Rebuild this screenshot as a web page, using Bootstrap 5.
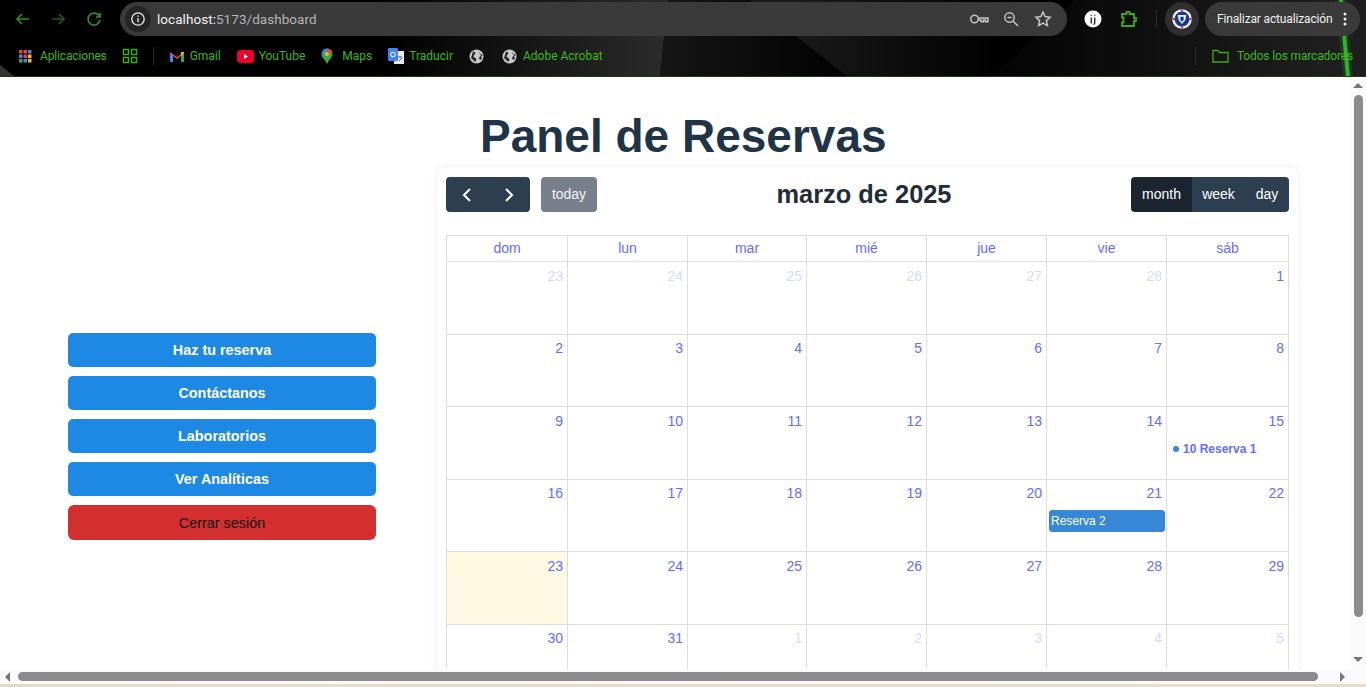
<!DOCTYPE html>
<html lang="es"><head><meta charset="utf-8"><title>Panel de Reservas</title>
<link href="https://cdn.jsdelivr.net/npm/bootstrap@5.3.0/dist/css/bootstrap.min.css" rel="stylesheet">
<style>
html,body{height:100%;overflow:hidden}
body{font-family:"Liberation Sans",Arial,sans-serif;background:#fff;font-size:16px}
.shell{height:687px}
.chrome{height:77px;flex:none;color:#3fb81d;font-family:Roboto,"Noto Sans",sans-serif;border-bottom:1px solid #1e3a1a;background-color:#000;background-repeat:no-repeat;
 background-image:url("data:image/svg+xml,%3Csvg xmlns='http://www.w3.org/2000/svg' width='1366' height='77'%3E%3Cdefs%3E%3ClinearGradient id='a' gradientUnits='userSpaceOnUse' x1='380' y1='0' x2='660' y2='0'%3E%3Cstop offset='0' stop-color='%23000'/%3E%3Cstop offset='1' stop-color='%232a2a2a'/%3E%3C/linearGradient%3E%3ClinearGradient id='b' gradientUnits='userSpaceOnUse' x1='665' y1='0' x2='830' y2='0'%3E%3Cstop offset='0' stop-color='%23151515'/%3E%3Cstop offset='1' stop-color='%23030303'/%3E%3C/linearGradient%3E%3ClinearGradient id='c' gradientUnits='userSpaceOnUse' x1='800' y1='0' x2='1010' y2='0'%3E%3Cstop offset='0' stop-color='%23191919'/%3E%3Cstop offset='1' stop-color='%23000'/%3E%3C/linearGradient%3E%3ClinearGradient id='d' gradientUnits='userSpaceOnUse' x1='1010' y1='0' x2='1320' y2='0'%3E%3Cstop offset='0' stop-color='%23040404'/%3E%3Cstop offset='1' stop-color='%231e1e1e'/%3E%3C/linearGradient%3E%3C/defs%3E%3Cpolygon points='380,0 668,0 660,77 380,77' fill='url(%23a)'/%3E%3Cpolygon points='668,0 750,0 848,77 660,77' fill='url(%23b)'/%3E%3Cpolygon points='750,0 1075,0 991,77 848,77' fill='url(%23c)'/%3E%3Cpolygon points='1075,0 1366,0 1366,77 991,77' fill='url(%23d)'/%3E%3Cpolygon points='0,65 15,77 0,77' fill='%23333'/%3E%3Cpolygon points='1335,0 1346,0 1353,77 1343,77' fill='%2322a022' fill-opacity='.18'/%3E%3Cpolygon points='1339,0 1343,0 1350,77 1346,77' fill='%232fb52c'/%3E%3C/svg%3E")}
.toprow{height:38px;padding:0 0 0 11px}
.tophold{height:38px}
.bookrow{height:36px;padding:0 13px 0 18px;font-size:12px}
.navglyph{width:24px;height:24px;margin-right:11px}
.navlast{margin-left:1px;margin-right:0}
.omnibox{width:947px;height:34px;margin-left:14px;margin-top:2px;border-radius:17px;background:#3a3a3a;padding:0 14px 0 5px}
.infocirc{width:26px;height:26px;border-radius:50%;background:#252525}
.url{font-size:13.5px;color:#b4b4b4;margin-left:6px;letter-spacing:.05px}
.url b{font-weight:400;color:#f2f2f2}
.omnitools{gap:12px}
.tophold.extras{margin-left:17px}
.puzzle{margin-left:17px}
.sep-top{margin:0 8px 0 17px}
.updatepill{height:34px;width:155px;margin-top:2px;margin-left:6px;border-radius:17px;background:#3a3a3a;color:#f0f0f0;font-size:12px;padding-left:12px;letter-spacing:-.15px}
.dots{margin-right:7px}
.bm{gap:5px;white-space:nowrap}
.tight{letter-spacing:-.15px;gap:7px}
.tight-b{letter-spacing:-.15px;gap:8px}
.vsep{width:1px;height:18px;background:#2c2c2c}
.avatarbox{width:34px;height:34px;border-radius:50%;background:#2f2f2f;margin-top:2px}
.bm-grid{margin-left:15px}
.sep-book{margin:0 15px 0 15px}
.bm-16{margin-left:16px}.bm-15{margin-left:15px}.bm-18{margin-left:18px}
.gap-3px{margin-left:3px}.gap-1px{margin-left:1px}
.sep-end{margin-right:16px}
.workarea{min-height:0}
.pagepane{width:1350px;overflow:hidden;background:#fff}
.sidepane{width:437px;flex:none;padding:256px 0 0 68px}
.sidebtn{display:block;width:308px;height:34px;margin-bottom:9px;padding:0;border:0;border-radius:5px;background:#1e88e5;color:#fff;font-size:14.4px;font-weight:700;line-height:34px;text-align:center}
.sidebtn.logout{height:35px;border-radius:6px;background:#d32f2f;color:#111;font-weight:400;padding-top:1px}
.mainpane{width:913px}
.pagetitle{margin:33px 0 4px 43px;font-size:46px;line-height:53px;font-weight:700;color:#1f3447}
.calcard{width:861px;height:520px;padding:10px 9px 0;border-radius:10px;box-shadow:0 0 9px rgba(0,0,0,.07);background:#fff}
.caltools{height:35px;margin-bottom:23px}
.fcbtn{height:35px;border:0;padding:0;background:#2c3e50;color:#fff;font-size:14px;border-radius:0;line-height:35px}
.arrowbtn{width:42px}
.firstb{border-radius:4px 0 0 4px}.lastb{border-radius:0 4px 4px 0}
.todaybtn{width:56px;margin-left:11px;background:#777f8b;border-radius:4px;color:#f1f2f3}
.activeb{width:61px;background:#1a252f;border-radius:4px 0 0 4px}
.weekb{width:53px}.dayb{width:44px;border-radius:0 4px 4px 0}
.caltitle{font-size:25.4px;font-weight:700;color:#1f2d3a;margin:0 0 0 92px;line-height:35px;width:350px;text-align:center;flex:none}
.calgrid{border-collapse:collapse;table-layout:fixed;width:843px}
.calgrid col{width:120px}
.calgrid col:nth-child(1){width:121px}
.calgrid col:nth-child(3){width:119px}
.calgrid col:nth-child(7){width:122px}
.calgrid th,.calgrid td{border:1px solid #ddd;padding:0}
.calgrid th{height:26px;text-align:center;font-weight:400;font-size:14px;color:#646cff}
.calgrid td{height:72.5px;vertical-align:top;text-align:right;color:#646cff;font-size:14px}
.calgrid td.ghost{color:#d8d9ff}
.calgrid td.todaycell{background:#fef9e0}
.num{display:block;padding:5.75px 4px 0 0;line-height:16px;height:29px}
.dotev{display:flex;align-items:center;padding-left:6px;margin-top:6px;font-size:12px;font-weight:700;color:#646cff;line-height:14px;text-align:left}
.dotev i{width:6px;height:6px;border-radius:50%;background:#3788d8;margin-right:4px}
.blockev{display:block;margin:1px 1px 0 2px;height:22px;line-height:21px;padding-left:1px;background:#3788d8;border:1px solid #3788d8;border-radius:3px;color:#fff;font-size:12px;text-align:left}
.vbar{width:16px;flex:none;background:#fafafa}
.vthumb{width:9px;height:522px;margin:7px 0 0 4px;background:#8c8c8c;border-radius:5px}
.hbar{height:15px;flex:none;background:#fafafa;padding:0 21px 0 5px}
.hthumb{width:1300px;height:9px;background:#8c8c8c;border-radius:5px;margin-left:8px}
.strip{height:3px;flex:none;background:linear-gradient(90deg,#e0dbc8,#e8dcca 25%,#e2dcc8 30%,#e6dccb 60%,#e9dccd)}
.tri-l{width:0;height:0;border:5px solid transparent;border-left:0;border-right:5px solid #777}
.tri-r{width:0;height:0;border:5px solid transparent;border-right:0;border-left:5px solid #777}
.tri-u{width:0;height:0;margin:6px auto 0;border:5px solid transparent;border-top:0;border-bottom:5px solid #777}
.tri-d{width:0;height:0;margin:auto auto 7px;border:5px solid transparent;border-bottom:0;border-top:5px solid #777}
</style></head><body>
<div class="shell d-flex flex-column">
<header class="chrome">
 <div class="toprow d-flex align-items-start">
  <div class="tophold d-flex align-items-center">
   <svg class="navglyph" viewBox="0 0 24 24" fill="none" stroke="#2f8f19" stroke-width="1.7"><path d="M18 12H6M11 7l-5 5 5 5"/></svg>
   <svg class="navglyph" viewBox="0 0 24 24" fill="none" stroke="#1e5c10" stroke-width="1.7"><path d="M6 12h12M13 7l5 5-5 5"/></svg>
   <svg class="navglyph navlast" viewBox="0 0 24 24" fill="none" stroke="#2f8f19" stroke-width="1.7"><path d="M17.500 9.500A6 6 0 1 0 18 13M18 6v4h-4"/></svg>
  </div>
  <div class="omnibox d-flex align-items-center">
   <span class="infocirc d-flex align-items-center justify-content-center"><svg width="16" height="16" viewBox="0 0 16 16" fill="none" stroke="#eee" stroke-width="1.3"><circle cx="8" cy="8" r="6.200"/><path d="M8 7v4.200M8 4.400v1.300"/></svg></span>
   <span class="url"><b>localhost:</b>5173/dashboard</span>
   <span class="ms-auto d-flex align-items-center omnitools">
    <svg width="20" height="20" viewBox="0 0 20 20" fill="none" stroke="#c4c4c4" stroke-width="1.5"><circle cx="5.500" cy="10" r="3.800"/><path d="M9.300 9H19v3.800h-2.500V11h-2v1.800H12V11H9.300"/></svg>
    <svg width="20" height="20" viewBox="0 0 20 20" fill="none" stroke="#c4c4c4" stroke-width="1.500"><circle cx="8.500" cy="8.500" r="4.700"/><path d="M12 12l5 5M6.500 8.500h4"/></svg>
    <svg width="20" height="20" viewBox="0 0 20 20" fill="none" stroke="#c4c4c4" stroke-width="1.500"><path d="M10 3l2.100 4.600 5 .6-3.700 3.400 1 5L10 14l-4.400 2.600 1-5L2.900 8.200l5-.6z"/></svg>
   </span>
  </div>
  <div class="tophold extras d-flex align-items-center">
   <svg width="18" height="18" viewBox="0 0 18 18"><circle cx="9" cy="9" r="8.500" fill="#fff"/><path d="M7.300 7.500v6M7.300 4.800v1M10.700 7.500v5.500c0 1-.5 1.300-1.200 1.300M10.700 4.800v1" stroke="#333" stroke-width="1.500" fill="none"/></svg>
   <svg class="puzzle" width="20" height="20" viewBox="0 0 20 20" fill="none" stroke="#3fa81d" stroke-width="1.800"><path d="M3 5h4.500V2.800h3V5H15v4h2v3h-2v5H3v-3.500h1.500v-5H3z"/></svg>
   <span class="vsep sep-top"></span>
  </div>
  <div class="avatarbox d-flex align-items-center justify-content-center">
   <svg width="20" height="20" viewBox="0 0 20 20"><circle cx="10" cy="10" r="9.800" fill="#eceef4"/><circle cx="10" cy="10" r="7.400" fill="#123a96"/><path d="M5.800 6h8.400l-.8 5-3.400 4-3.400-4z" fill="#f2f4fa"/><path d="M8.300 7.800h3.400v3L10 13l-1.700-2.200z" fill="#123a96"/><g fill="#c8332e"><circle cx="1.700" cy="10" r="1.200"/><circle cx="18.300" cy="10" r="1.200"/><circle cx="10" cy="1.700" r="1.100"/><circle cx="10" cy="18.300" r="1.100"/></g></svg>
  </div>
  <div class="updatepill d-flex align-items-center"><span>Finalizar actualización</span>
   <svg class="ms-auto dots" width="16" height="16" viewBox="0 0 16 16" fill="#eee"><circle cx="8" cy="3" r="1.500"/><circle cx="8" cy="8" r="1.500"/><circle cx="8" cy="13" r="1.500"/></svg>
  </div>
 </div>
 <div class="bookrow d-flex align-items-center">
  <span class="bm tight d-flex align-items-center"><svg width="15" height="15" viewBox="0 0 15 15"><rect x="1" y="1" width="3.500" height="3.500" fill="#e8453c"/><rect x="5.500" y="1" width="3.500" height="3.500" fill="#e8453c"/><rect x="10" y="1" width="3.500" height="3.500" fill="#4285f4"/><rect x="1" y="5.500" width="3.500" height="3.500" fill="#4285f4"/><rect x="5.500" y="5.500" width="3.500" height="3.500" fill="#e8453c"/><rect x="10" y="5.500" width="3.500" height="3.500" fill="#fbbc05"/><rect x="1" y="10" width="3.500" height="3.500" fill="#34a853"/><rect x="5.500" y="10" width="3.500" height="3.500" fill="#4285f4"/><rect x="10" y="10" width="3.500" height="3.500" fill="#fbbc05"/></svg>Aplicaciones</span>
  <svg class="bm-grid" width="16" height="16" viewBox="0 0 16 16" fill="none" stroke="#3fa81d" stroke-width="1.500"><rect x="1.500" y="1.500" width="5" height="5"/><rect x="9.500" y="1.500" width="5" height="5"/><rect x="1.500" y="9.500" width="5" height="5"/><rect x="9.500" y="9.500" width="5" height="5"/></svg>
  <span class="vsep sep-book"></span>
  <span class="bm d-flex align-items-center"><svg width="16" height="13" viewBox="0 0 16 13"><path d="M1 12V2l7 5 7-5v10h-3V6L8 9 4 6v6z" fill="#ea4335"/><path d="M1 12h3V6L1 3z" fill="#4285f4"/><path d="M12 12h3V3l-3 3z" fill="#34a853"/><path d="M15 3V2l-3 0v4z" fill="#fbbc05"/></svg>Gmail</span>
  <span class="bm bm-16 d-flex align-items-center"><svg width="17" height="13" viewBox="0 0 17 13"><rect width="17" height="13" rx="3.500" fill="#f0002a"/><path d="M7 4l4 2.500L7 9z" fill="#fff"/></svg>YouTube</span>
  <span class="bm bm-15 d-flex align-items-center"><svg width="14" height="17" viewBox="0 0 14 17"><path d="M7 .5a5.500 5.500 0 0 1 5.500 5.500C12.500 10 8 12 7 16.500 6 12 1.500 10 1.500 6A5.500 5.500 0 0 1 7 .5z" fill="#34a853"/><path d="M3 2.300A5.500 5.500 0 0 1 7 .5v3L3.500 8z" fill="#4285f4"/><path d="M7 .5a5.500 5.500 0 0 1 5 3L9 6 7 4z" fill="#ea4335"/><circle cx="7" cy="6" r="2" fill="#fbbc05"/></svg><span class="gap-3px">Maps</span></span>
  <span class="bm bm-16 d-flex align-items-center"><svg width="16" height="17" viewBox="0 0 16 17"><rect x="6" y="3" width="10" height="13" fill="#e8e8e8"/><rect y="0" width="10" height="13" rx="1" fill="#4285f4"/><circle cx="5" cy="6.500" r="2.300" fill="none" stroke="#fff" stroke-width="1"/><path d="M10 9h4M12 8v1M11 13l3-3" stroke="#666" stroke-width="1"/></svg>Traducir</span>
  <svg class="bm-16" width="15" height="15" viewBox="0 0 15 15"><circle cx="7.500" cy="7.500" r="7" fill="#c9c9c9"/><path d="M4 2.500c1.500.3 2.500 1 2.300 2S4.500 6 4.700 7.500 7 8.500 7.300 10 6.500 12 6.200 13L2 9zM10.500 3c-.8 1 .2 1.800 1.200 1.800s1.500 1 1.800 2l-2.500.2-1 2.500 1.200 1.500L13 9.500z" fill="#2a2a2a"/></svg>
  <span class="bm bm-18 d-flex align-items-center"><svg width="15" height="15" viewBox="0 0 15 15"><circle cx="7.500" cy="7.500" r="7" fill="#c9c9c9"/><path d="M4 2.500c1.500.3 2.500 1 2.300 2S4.500 6 4.700 7.500 7 8.500 7.300 10 6.500 12 6.200 13L2 9zM10.500 3c-.8 1 .2 1.800 1.200 1.800s1.500 1 1.800 2l-2.500.2-1 2.500 1.200 1.500L13 9.500z" fill="#2a2a2a"/></svg><span class="gap-1px">Adobe Acrobat</span></span>
  <span class="vsep ms-auto sep-end"></span>
  <span class="bm tight-b d-flex align-items-center"><svg width="17" height="14" viewBox="0 0 17 14" fill="none" stroke="#3fa81d" stroke-width="1.300"><path d="M1 1.500h5l1.500 2H16v9.500H1z"/></svg>Todos los marcadores</span>
 </div>
</header>
<div class="workarea flex-grow-1 d-flex">
 <main class="pagepane d-flex">
  <nav class="sidepane">
   <button class="sidebtn">Haz tu reserva</button>
   <button class="sidebtn">Contáctanos</button>
   <button class="sidebtn">Laboratorios</button>
   <button class="sidebtn">Ver Analíticas</button>
   <button class="sidebtn logout">Cerrar sesión</button>
  </nav>
  <section class="mainpane">
   <h1 class="pagetitle">Panel de Reservas</h1>
   <div class="calcard">
    <div class="caltools d-flex align-items-center">
     <button class="fcbtn arrowbtn firstb"><svg width="14" height="14" viewBox="0 0 14 14" fill="none" stroke="#fff" stroke-width="2"><path d="M10 1L4 7l6 6"/></svg></button>
     <button class="fcbtn arrowbtn lastb"><svg width="14" height="14" viewBox="0 0 14 14" fill="none" stroke="#fff" stroke-width="2"><path d="M4 1l6 6-6 6"/></svg></button>
     <button class="fcbtn todaybtn">today</button>
     <h2 class="caltitle">marzo de 2025</h2>
     <div class="ms-auto d-flex">
      <button class="fcbtn activeb">month</button><button class="fcbtn weekb">week</button><button class="fcbtn dayb">day</button>
     </div>
    </div>
    <table class="calgrid">
     <colgroup><col><col><col><col><col><col><col></colgroup>
     <thead><tr><th>dom</th><th>lun</th><th>mar</th><th>mié</th><th>jue</th><th>vie</th><th>sáb</th></tr></thead>
     <tbody>
      <tr><td class="ghost"><span class="num">23</span></td><td class="ghost"><span class="num">24</span></td><td class="ghost"><span class="num">25</span></td><td class="ghost"><span class="num">26</span></td><td class="ghost"><span class="num">27</span></td><td class="ghost"><span class="num">28</span></td><td><span class="num">1</span></td></tr>
      <tr><td><span class="num">2</span></td><td><span class="num">3</span></td><td><span class="num">4</span></td><td><span class="num">5</span></td><td><span class="num">6</span></td><td><span class="num">7</span></td><td><span class="num">8</span></td></tr>
      <tr><td><span class="num">9</span></td><td><span class="num">10</span></td><td><span class="num">11</span></td><td><span class="num">12</span></td><td><span class="num">13</span></td><td><span class="num">14</span></td><td><span class="num">15</span><span class="dotev"><i></i>10 Reserva 1</span></td></tr>
      <tr><td><span class="num">16</span></td><td><span class="num">17</span></td><td><span class="num">18</span></td><td><span class="num">19</span></td><td><span class="num">20</span></td><td><span class="num">21</span><span class="blockev">Reserva 2</span></td><td><span class="num">22</span></td></tr>
      <tr><td class="todaycell"><span class="num">23</span></td><td><span class="num">24</span></td><td><span class="num">25</span></td><td><span class="num">26</span></td><td><span class="num">27</span></td><td><span class="num">28</span></td><td><span class="num">29</span></td></tr>
      <tr><td><span class="num">30</span></td><td><span class="num">31</span></td><td class="ghost"><span class="num">1</span></td><td class="ghost"><span class="num">2</span></td><td class="ghost"><span class="num">3</span></td><td class="ghost"><span class="num">4</span></td><td class="ghost"><span class="num">5</span></td></tr>
     </tbody>
    </table>
   </div>
  </section>
 </main>
 <div class="vbar d-flex flex-column">
  <div class="tri-u"></div>
  <div class="vthumb"></div>
  <div class="tri-d"></div>
 </div>
</div>
<div class="hbar d-flex align-items-center"><div class="tri-l"></div><div class="hthumb"></div><div class="tri-r ms-auto"></div></div>
<div class="strip"></div>
</div>
</body></html>
